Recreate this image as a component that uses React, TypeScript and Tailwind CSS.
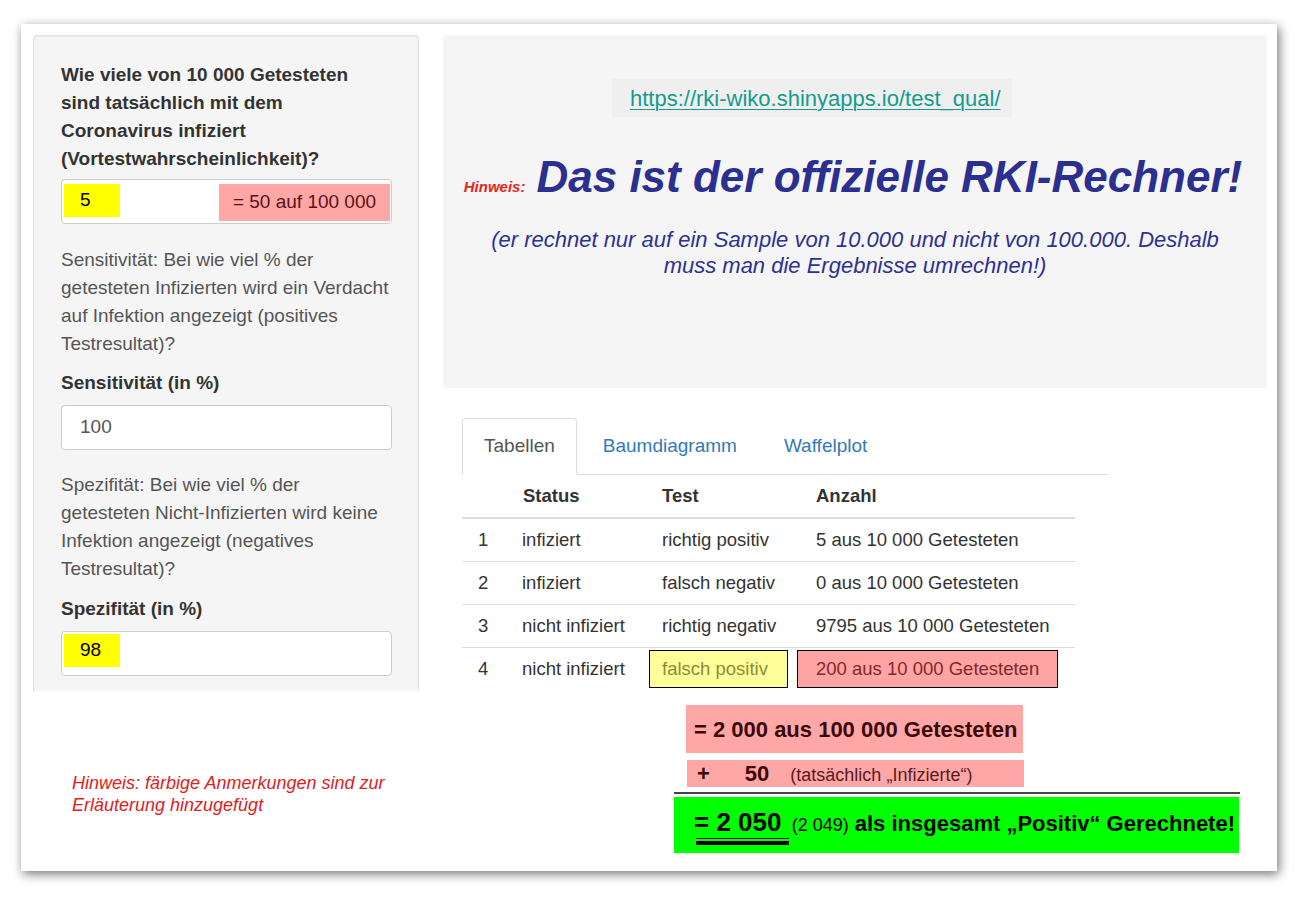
import React from "react";

const F = "font-['Liberation_Sans',Arial,sans-serif]";

function Sidebar() {
  return (
    <div className="w-[386px] h-[656px] bg-[#f5f5f5] border border-b-0 border-[#e3e3e3] rounded-t-[4px] pt-[25px] pl-[27px] pr-[26px] shadow-[inset_0_1px_1px_rgba(0,0,0,0.05)]">
      <div className="text-[19px] leading-[28px] font-bold text-[#333] whitespace-nowrap">
        Wie viele von 10 000 Getesteten
        <br />
        sind tatsächlich mit dem
        <br />
        Coronavirus infiziert
        <br />
        (Vortestwahrscheinlichkeit)?
      </div>
      <div className="mt-[6px] h-[45px] border border-[#ccc] rounded-[4px] bg-white flex items-start">
        <div className="ml-[2px] mt-[4px] w-[56px] h-[33px] bg-[#ffff00] flex items-center pl-[16px] text-[19px] text-black">
          5
        </div>
        <div className="ml-auto mr-[1px] mt-[4px] w-[171px] h-[37px] bg-[#ffa7a7] flex items-center justify-center text-[19px] text-[#5a1212]">
          = 50 auf 100 000
        </div>
      </div>
      <div className="mt-[22px] text-[19px] leading-[28px] text-[#555] whitespace-nowrap">
        Sensitivität: Bei wie viel % der
        <br />
        getesteten Infizierten wird ein Verdacht
        <br />
        auf Infektion angezeigt (positives
        <br />
        Testresultat)?
      </div>
      <div className="mt-[11px] text-[19px] leading-[28px] font-bold text-[#333]">Sensitivität (in %)</div>
      <div className="mt-[8px] h-[45px] border border-[#ccc] rounded-[4px] bg-white flex items-center pl-[18px] text-[19px] text-[#555]">
        100
      </div>
      <div className="mt-[21px] text-[19px] leading-[28px] text-[#555] whitespace-nowrap">
        Spezifität: Bei wie viel % der
        <br />
        getesteten Nicht-Infizierten wird keine
        <br />
        Infektion angezeigt (negatives
        <br />
        Testresultat)?
      </div>
      <div className="mt-[12px] text-[19px] leading-[28px] font-bold text-[#333]">Spezifität (in %)</div>
      <div className="mt-[8px] h-[45px] border border-[#ccc] rounded-[4px] bg-white flex items-start">
        <div className="ml-[2px] mt-[2px] w-[56px] h-[33px] bg-[#ffff00] flex items-center pl-[16px] text-[19px] text-black">
          98
        </div>
      </div>
    </div>
  );
}

function TopPanel() {
  return (
    <div className="h-[353px] bg-[#f5f5f5] flex flex-col">
      <div className="mt-[44px] ml-[169px] w-[400px] h-[38px] bg-[#efefef] flex items-center pl-[18px]">
        <span className="text-[22px] text-[#169b8e] underline underline-offset-[3px] decoration-1">
          https://rki-wiko.shinyapps.io/test_qual/
        </span>
      </div>
      <div className="mt-[35px] flex justify-center items-baseline h-[50px] whitespace-nowrap pr-[4px]">
        <span className="text-[15px] font-bold italic text-[#e52421] mr-[11px]">Hinweis:</span>
        <span className="text-[44px] leading-[50px] font-bold italic text-[#2b2f8f]">
          Das ist der offizielle RKI-Rechner!
        </span>
      </div>
      <div className="mt-[25px] text-center text-[22px] leading-[26px] italic text-[#2e3192] whitespace-nowrap">
        (er rechnet nur auf ein Sample von 10.000 und nicht von 100.000. Deshalb
        <br />
        muss man die Ergebnisse umrechnen!)
      </div>
    </div>
  );
}

function Tabs() {
  return (
    <div className="pt-[30px] pl-[19px]">
      <div className="w-[646px] h-[57px] border-b border-[#ddd] flex items-end">
        <div className="h-[57px] -mb-px px-[21px] border border-[#ddd] border-b-white rounded-t-[4px] bg-white flex items-center text-[19px] text-[#555]">
          Tabellen
        </div>
        <div className="h-[56px] ml-[2px] px-[24px] flex items-center text-[19px] text-[#337ab7]">Baumdiagramm</div>
        <div className="h-[56px] ml-[2px] px-[21px] flex items-center text-[19px] text-[#337ab7]">Waffelplot</div>
      </div>
      <div className="w-[613px] text-[18.5px] text-[#333]">
        <div className="grid grid-cols-[50px_140px_154px_269px] h-[44px] items-center border-b-2 border-[#ddd] font-bold">
          <div />
          <div className="pl-[11px]">Status</div>
          <div className="pl-[10px]">Test</div>
          <div className="pl-[10px]">Anzahl</div>
        </div>
        {[
          ["1", "infiziert", "richtig positiv", "5 aus 10 000 Getesteten"],
          ["2", "infiziert", "falsch negativ", "0 aus 10 000 Getesteten"],
          ["3", "nicht infiziert", "richtig negativ", "9795 aus 10 000 Getesteten"],
        ].map((r) => (
          <div key={r[0]} className="grid grid-cols-[50px_140px_154px_269px] h-[43px] items-center border-b border-[#ddd] whitespace-nowrap">
            <div className="pl-[16px]">{r[0]}</div>
            <div className="pl-[10px]">{r[1]}</div>
            <div className="pl-[10px]">{r[2]}</div>
            <div className="pl-[10px]">{r[3]}</div>
          </div>
        ))}
        <div className="grid grid-cols-[50px_140px_154px_269px] h-[42px] items-center whitespace-nowrap">
          <div className="pl-[16px]">4</div>
          <div className="pl-[10px]">nicht infiziert</div>
          <div>
            <div className="-ml-[3px] w-[139px] h-[38px] border border-black bg-[#ffff99] flex items-center pl-[12px] text-[#8c8c3a]">
              falsch positiv
            </div>
          </div>
          <div>
            <div className="-ml-[9px] w-[261px] h-[38px] border border-black bg-[#ffa3a3] flex items-center pl-[18px] text-[#7d2a2a]">
              200 aus 10 000 Getesteten
            </div>
          </div>
        </div>
      </div>
    </div>
  );
}

function Bottom() {
  return (
    <div className="flex">
      <div className="w-[653px] pl-[51px] pt-[81px] text-[18px] leading-[22px] italic text-[#e02020] whitespace-nowrap">
        Hinweis: färbige Anmerkungen sind zur
        <br />
        Erläuterung hinzugefügt
      </div>
      <div className="w-[566px] pt-[14px] whitespace-nowrap">
        <div className="ml-[12px] w-[337px] h-[48px] bg-[#ffa7a7] flex items-center pl-[8px] text-[22px] font-bold text-[#3a0808]">
          = 2 000 aus 100 000 Getesteten
        </div>
        <div className="mt-[7px] ml-[13px] w-[337px] h-[27px] bg-[#ffa7a7] flex items-baseline pl-[10px] pt-[1px] text-[#3a0808]">
          <span className="text-[22px] leading-[26px] font-bold">+</span>
          <span className="ml-[35px] text-[22px] leading-[26px] font-bold">50</span>
          <span className="ml-[21px] text-[18px] text-[#5a1a1a]">(tatsächlich „Infizierte“)</span>
        </div>
        <div className="mt-[5px] h-[2px] w-[566px] bg-[#444]" />
        <div className="mt-[3px] h-[56px] w-[565px] bg-[#00ff00] flex items-baseline pl-[20px] pt-[10px] text-black">
          <span className="inline-flex flex-col">
            <span className="text-[26px] leading-[30px] font-bold">= 2 050&nbsp;</span>
            <span className="ml-[2px] mt-[1px] h-[1px] bg-black" />
            <span className="ml-[2px] mt-[2px] h-[4px] bg-black" />
          </span>
          <span className="ml-[3px] text-[18px]">(2 049)</span>
          <span className="ml-[6px] text-[22px] font-bold">als insgesamt „Positiv“ Gerechnete!</span>
        </div>
      </div>
    </div>
  );
}

export default function App() {
  return (
    <div className={`w-[1305px] h-[897px] bg-white pt-[24px] pl-[21px] ${F}`}>
      <div className="w-[1256px] h-[847px] bg-white shadow-[2px_3px_10px_rgba(0,0,0,0.55)] flex flex-col">
        <div className="flex pt-[11px] pl-[12px]">
          <Sidebar />
          <div className="ml-[24px] w-[824px]">
            <TopPanel />
            <Tabs />
          </div>
        </div>
        <Bottom />
      </div>
    </div>
  );
}
